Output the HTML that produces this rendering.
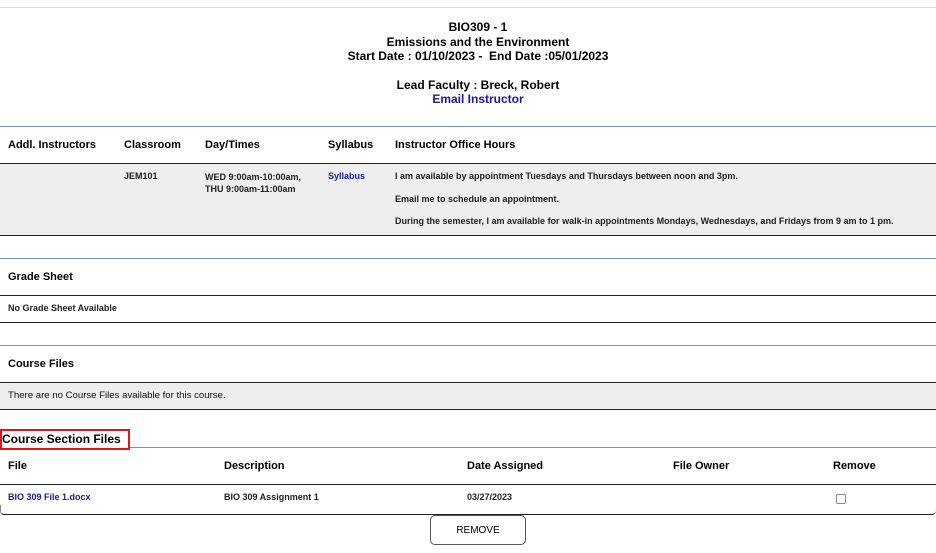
<!DOCTYPE html>
<html><head><style>
body{margin:0;width:936px;height:553px;background:#fff;font-family:"Liberation Sans",Arial,sans-serif;color:#000;position:relative;overflow:hidden}
.a{position:absolute;white-space:nowrap}
.hl{position:absolute;left:0;width:936px;height:1px}
.blue{background:#7196c8}
.blk{background:#222}
.t{left:0;width:956px;text-align:center;font-size:12px;font-weight:bold}
.h{font-size:11px;font-weight:bold}
.s{font-size:9px;font-weight:bold;color:#222}
.lk{color:#1a1a9a}
.g{position:absolute;left:0;width:936px;background:#eeeeee}
</style></head><body>
<div class="hl" style="top:7px;background:#d6d6d6"></div>
<div class="a t" style="top:20px">BIO309 - 1</div>
<div class="a t" style="top:35px">Emissions and the Environment</div>
<div class="a t" style="top:49px">Start Date : 01/10/2023 -&nbsp; End Date :05/01/2023</div>
<div class="a t" style="top:78px">Lead Faculty : Breck, Robert</div>
<div class="a t lk" style="top:92px">Email Instructor</div>

<div class="hl blue" style="top:126px"></div>
<div class="a h" style="left:8px;top:139px">Addl. Instructors</div>
<div class="a h" style="left:124px;top:139px">Classroom</div>
<div class="a h" style="left:205px;top:139px">Day/Times</div>
<div class="a h" style="left:328px;top:139px">Syllabus</div>
<div class="a h" style="left:395px;top:139px">Instructor Office Hours</div>
<div class="g" style="top:164px;height:71px"></div>
<div class="hl blk" style="top:163px"></div>
<div class="a s" style="left:124px;top:171px">JEM101</div>
<div class="a s" style="left:205px;top:171px;line-height:12px">WED 9:00am-10:00am,<br>THU 9:00am-11:00am</div>
<div class="a s lk" style="left:328px;top:171px">Syllabus</div>
<div class="a s" style="left:395px;top:171px">I am available by appointment Tuesdays and Thursdays between noon and 3pm.</div>
<div class="a s" style="left:395px;top:194px">Email me to schedule an appointment.</div>
<div class="a s" style="left:395px;top:216px">During the semester, I am available for walk-in appointments Mondays, Wednesdays, and Fridays from 9 am to 1 pm.</div>
<div class="hl blk" style="top:235px"></div>

<div class="hl blue" style="top:258px"></div>
<div class="a h" style="left:8px;top:271px">Grade Sheet</div>
<div class="hl blk" style="top:295px"></div>
<div class="a s" style="left:8px;top:303px">No Grade Sheet Available</div>
<div class="hl blk" style="top:322px"></div>

<div class="hl blue" style="top:345px"></div>
<div class="a h" style="left:8px;top:358px">Course Files</div>
<div class="g" style="top:383px;height:26px"></div>
<div class="hl blk" style="top:382px"></div>
<div class="a s" style="left:8px;top:390px;font-weight:normal;color:#111;font-size:9.6px">There are no Course Files available for this course.</div>
<div class="hl blk" style="top:409px"></div>

<div class="a" style="left:0;top:429px;width:130px;height:21px;border:2px solid #e8121a;box-sizing:border-box"></div>
<div class="a" style="left:2px;top:432px;font-size:12px;font-weight:bold">Course Section Files</div>
<div class="hl blue" style="top:447px;left:130px;width:806px"></div>
<div class="a h" style="left:8px;top:460px">File</div>
<div class="a h" style="left:224px;top:460px">Description</div>
<div class="a h" style="left:467px;top:460px">Date Assigned</div>
<div class="a h" style="left:673px;top:460px">File Owner</div>
<div class="a h" style="left:833px;top:460px">Remove</div>
<div class="hl blk" style="top:484px"></div>
<div class="a s lk" style="left:8px;top:492px">BIO 309 File 1.docx</div>
<div class="a s" style="left:224px;top:492px">BIO 309 Assignment 1</div>
<div class="a s" style="left:467px;top:492px">03/27/2023</div>
<div class="a" style="left:836px;top:494px;width:8px;height:8px;border:1px solid #888;border-radius:2px"></div>
<div class="a" style="left:0;top:505px;width:936px;height:10px;border-bottom:1px solid #222;border-left:1px solid #888;border-radius:0 0 4px 4px;box-sizing:border-box"></div>
<div class="a" style="left:430px;top:515px;width:96px;height:30px;border:1px solid #555;border-radius:5px;box-sizing:border-box;font-size:10px;text-align:center;line-height:29px">REMOVE</div>
</body></html>
